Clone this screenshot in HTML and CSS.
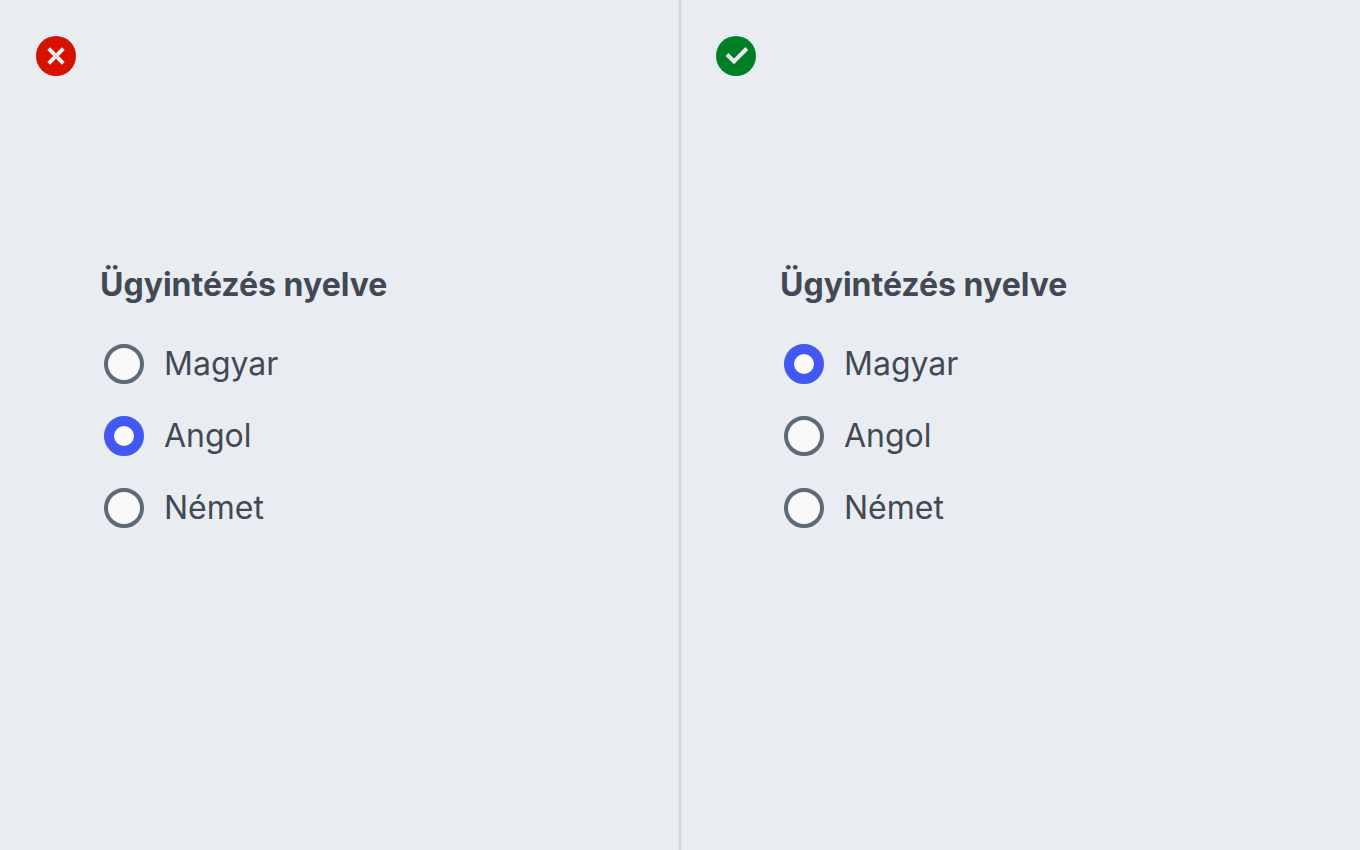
FILE: index.html
```html
<!DOCTYPE html>
<html lang="hu">
<head>
    <meta charset="UTF-8">
    <title>Ügyintézés nyelve</title>
    <meta name="viewport" content="width=device-width, initial-scale=1">
    <link rel="stylesheet" href="styles.css">
</head>
<body>

<main class="compare">
    <section class="panel">
        <svg class="mark mark-bad" viewBox="0 0 40 40" role="img" aria-label="Helytelen">
            <circle cx="20" cy="20" r="20"/>
            <path d="M12.700 12.700 27.300 27.300M27.300 12.700 12.700 27.300"/>
        </svg>
        <fieldset>
            <legend>Ügyintézés nyelve</legend>
            <label><input type="radio" name="lang-bad" value="hu">Magyar</label>
            <label><input type="radio" name="lang-bad" value="en" checked>Angol</label>
            <label><input type="radio" name="lang-bad" value="de">Német</label>
        </fieldset>
    </section>

    <section class="panel">
        <svg class="mark mark-good" viewBox="0 0 40 40" role="img" aria-label="Helyes">
            <circle cx="20" cy="20" r="20"/>
            <path d="M11 18.500 18 25.500 30.800 12.500"/>
        </svg>
        <fieldset>
            <legend>Ügyintézés nyelve</legend>
            <label><input type="radio" name="lang-good" value="hu" checked>Magyar</label>
            <label><input type="radio" name="lang-good" value="en">Angol</label>
            <label><input type="radio" name="lang-good" value="de">Német</label>
        </fieldset>
    </section>
</main>

</body>
</html>
```
FILE: styles.css
```css
* {
    box-sizing: border-box;
}
body {
    font-family: Inter, sans-serif;
    background-color: #e9edf2;
    color: #424955;
    margin: 0;
}
.compare {
    display: grid;
    grid-template-columns: 1fr 1fr;
    min-height: 100vh;
    background: linear-gradient(#d0d5db, #d0d5db) center / 2px 100% no-repeat;
}
.panel {
    padding: 36px;
}
.mark {
    display: block;
    width: 40px;
    height: 40px;
}
.mark path {
    fill: none;
    stroke: #e9edf2;
    stroke-width: 4;
}
.mark-bad circle {
    fill: #d81000;
}
.mark-good circle {
    fill: #008024;
}
fieldset {
    border: none;
    margin: 185px 0 0;
    padding: 0 64px;
}
legend {
    padding: 0;
    margin-bottom: 31px;
    font-size: 32px;
    line-height: 48px;
    font-weight: 700;
}
label {
    display: flex;
    align-items: center;
    gap: 20px;
    width: fit-content;
    margin: 0 4px 24px;
    font-size: 32px;
    line-height: 48px;
    cursor: pointer;
}
input[type="radio"] {
    appearance: none;
    width: 40px;
    height: 40px;
    margin: 0;
    border: 4px solid #5d6b79;
    border-radius: 50%;
    background-color: #f8fafc;
    cursor: pointer;
}
input[type="radio"]:checked {
    border: 10px solid #4358f0;
}
```
